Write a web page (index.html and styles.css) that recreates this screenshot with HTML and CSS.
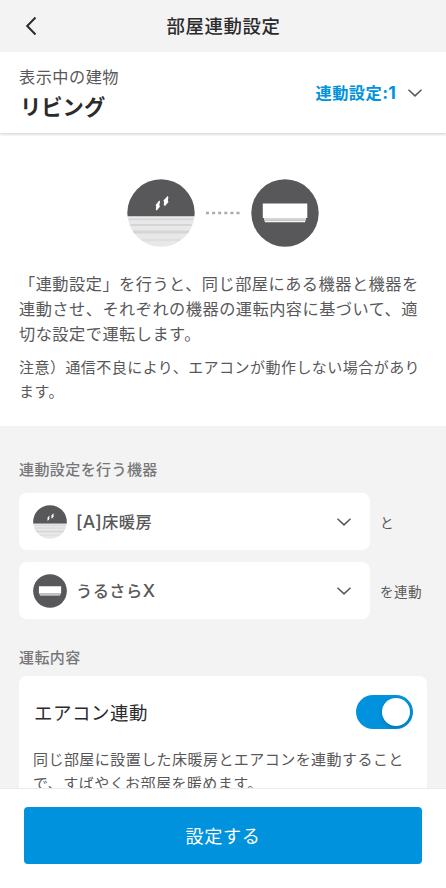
FILE: index.html
```html
<!DOCTYPE html>
<html lang="ja">
<head>
<meta charset="utf-8">
<title>部屋連動設定</title>
<link rel="stylesheet" href="styles.css">
</head>
<body>
<svg class="symbols" width="0" height="0" aria-hidden="true">
  <defs>
    <clipPath id="disc"><circle cx="34" cy="34" r="33.7"/></clipPath>
    <symbol id="floor" viewBox="0 0 68 68">
      <g clip-path="url(#disc)">
        <path fill="#58585a" d="M0 0h68v37.500H0z"/>
        <path fill="#e8e8e8" d="M0 37.500h68v31H0z"/>
        <path fill="#d5d5d5" d="M2 39.500h64v1.800H2zM3.500 45h61v2h-61zM6 51.500h56v3H6zM14 60.500h40v1H14z"/>
      </g>
      <path fill="#fff" d="M32.300 21.500l.8 1-.8 3.500.7 1.500-3.200 4-1-1 .4-3-.6-1.500zM40.600 17l.8 1.200-.6 3.300.7 1.500-3.500 4-1.300-1 .4-3-.7-1.500z"/>
    </symbol>
    <symbol id="aircon" viewBox="0 0 68 68">
      <circle cx="34" cy="34" r="33.7" fill="#58585a"/>
      <path fill="#fff" d="M11.800 24.500h44.500V39H11.800z"/>
      <path fill="#d4d4d4" d="M13 39h42v2.500H13z"/>
      <path fill="#f5f5f5" d="M13.500 41.500h41l-.5 1.700H14z"/>
    </symbol>
    <symbol id="down" viewBox="0 0 16 10">
      <path d="M1.500 1.800L8 7.900l6.500-6.100" fill="none" stroke="#58585a" stroke-width="1.500"/>
    </symbol>
  </defs>
</svg>
<div class="screen">
  <header class="topbar">
    <svg class="back" viewBox="0 0 12 20"><path d="M10.500 1.500L2.200 10l8.300 8.500" fill="none" stroke="#2b2b2d" stroke-width="2"/></svg>
    <h1 class="title">部屋連動設定</h1>
  </header>
  <div class="building">
    <div class="place">
      <div class="place-label">表示中の建物</div>
      <div class="place-name">リビング</div>
    </div>
    <div class="setting">連動設定<span class="latin">:1</span></div>
    <svg class="chevron"><use href="#down"/></svg>
  </div>
  <main class="content">
    <section class="intro">
      <div class="pair">
        <svg class="big"><use href="#floor"/></svg>
        <svg class="dots" viewBox="0 0 34 4"><path d="M0 2h34" stroke="#aaa" stroke-width="2.600" stroke-dasharray="3 3.100"/></svg>
        <svg class="big"><use href="#aircon"/></svg>
      </div>
      <p class="lead">「連動設定」を行うと、同じ部屋にある機器と機器を<br>連動させ、それぞれの機器の運転内容に基づいて、適<br>切な設定で運転します。</p>
      <p class="note">注意）通信不良により、エアコンが動作しない場合があり<br>ます。</p>
    </section>
    <section class="form">
      <h2 class="label">連動設定を行う機器</h2>
      <div class="row">
        <div class="select"><svg class="small"><use href="#floor"/></svg><span class="device"><span class="latin">[A]</span>床暖房</span><svg class="chevron"><use href="#down"/></svg></div>
        <span class="suffix">と</span>
      </div>
      <div class="row">
        <div class="select"><svg class="small"><use href="#aircon"/></svg><span class="device">うるさら<span class="latin">X</span></span><svg class="chevron"><use href="#down"/></svg></div>
        <span class="suffix">を連動</span>
      </div>
      <h2 class="label operation">運転内容</h2>
      <div class="card">
        <div class="card-head"><span class="card-title">エアコン連動</span><span class="toggle"><span class="knob"></span></span></div>
        <p class="desc">同じ部屋に設置した床暖房とエアコンを連動すること<br>で、すばやくお部屋を暖めます。</p>
      </div>
    </section>
  </main>
  <footer class="footer"><button class="submit">設定する</button></footer>
</div>
</body>
</html>
```
FILE: styles.css
```css
* { box-sizing: border-box; margin: 0; padding: 0; }
body { font-family: "Noto Sans CJK JP", sans-serif; color: #58585a; background: #fff; }
svg { display: block; flex: none; }
.symbols { position: absolute; }
.latin { font-family: Inter, sans-serif; font-size: 17.6px; letter-spacing: .2px; line-height: 1; }
.screen { width: 446px; height: 888px; display: flex; flex-direction: column; overflow: hidden; white-space: nowrap; }
.topbar { height: 52px; flex: none; background: #f3f3f3; display: grid; grid-template-columns: 60px 1fr 60px; align-items: center; }
.back { width: 12px; height: 20px; margin-left: 25px; }
.title { font-size: 18.4px; letter-spacing: .6px; line-height: 28px; font-weight: 500; text-align: center; color: #2b2b2d; padding: 0 0 2px 1px; }
.building { height: 81px; flex: none; display: flex; align-items: center; padding: 0 23px 0 19px; background: #fff; box-shadow: 0 2px 2px rgba(0,0,0,.13); z-index: 1; }
.place { flex: 1; padding-top: 3px; }
.place-label { font-size: 16.2px; letter-spacing: .47px; line-height: 24px; }
.place-name { font-size: 21.3px; line-height: 36px; font-weight: 700; color: #2b2b2d; padding-left: 1px; }
.setting { font-size: 16.2px; letter-spacing: .45px; line-height: 24px; font-weight: 700; color: #0092dc; margin: 0 11px 2px 0; }
.chevron { width: 16px; height: 10px; }
.content { flex: 1; min-height: 0; overflow: hidden; }
.intro { height: 293px; padding: 46px 19px 0; }
.pair { display: flex; align-items: center; justify-content: center; gap: 11px; margin-bottom: 24px; }
.big { width: 68px; height: 68px; }
.dots { width: 34px; height: 4px; }
.lead { font-size: 16.2px; letter-spacing: .49px; line-height: 25px; }
.note { font-size: 15px; letter-spacing: .46px; line-height: 24px; margin-top: 9px; }
.form { height: 500px; background: #f3f3f3; padding: 31px 19px 0; }
.label { font-size: 15px; letter-spacing: .42px; line-height: 24px; font-weight: 500; color: #77777a; margin-bottom: 12px; }
.row { display: flex; align-items: center; gap: 10px; margin-bottom: 12px; }
.select { width: 351px; height: 57px; background: #fff; border-radius: 8px; display: flex; align-items: center; padding: 0 18px 0 14px; }
.small { width: 34px; height: 34px; }
.device { flex: 1; margin-left: 9px; padding-bottom: 1px; font-size: 16.3px; letter-spacing: .4px; line-height: 24px; font-weight: 500; }
.suffix { font-size: 13.6px; letter-spacing: .4px; line-height: 20px; }
.operation { margin: 26px 0 7px; }
.card { width: 408px; height: 250px; background: #fff; border-radius: 8px; padding: 19px 14px; }
.card-head { display: flex; align-items: center; justify-content: space-between; height: 34px; }
.card-title { font-size: 18.5px; letter-spacing: .5px; line-height: 28px; color: #2b2b2d; padding: 0 0 1px 1px; }
.toggle { width: 57px; height: 34px; border-radius: 17px; background: #0092dc; display: flex; align-items: center; justify-content: flex-end; padding-right: 3px; }
.knob { width: 28px; height: 28px; border-radius: 50%; background: #fff; box-shadow: 0 2px 4px rgba(0,0,0,.2); }
.desc { font-size: 15px; letter-spacing: .45px; line-height: 24px; margin-top: 18px; }
.footer { height: 100px; flex: none; background: #fff; border-top: 1px solid #ececec; padding: 18px 24px; }
.submit { width: 100%; height: 57px; border: 0; border-radius: 4px; background: #0092dc; color: #fff; font: 400 18.2px/28px "Noto Sans CJK JP", sans-serif; letter-spacing: .5px; display: block; padding-bottom: 2px; }
```
